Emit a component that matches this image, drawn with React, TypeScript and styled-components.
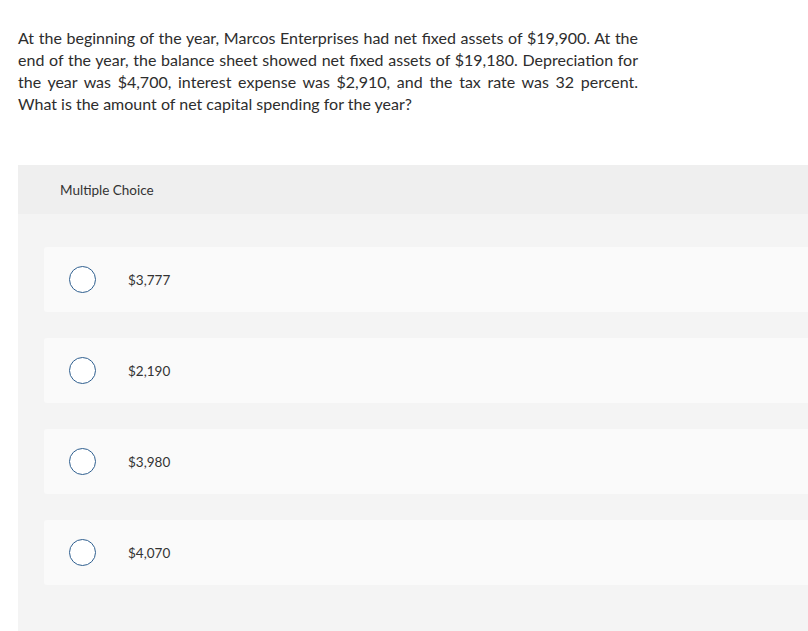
import styled, { createGlobalStyle } from "styled-components";

const choices = ["$3,777", "$2,190", "$3,980", "$4,070"];

export default function App() {
  return (
    <Page>
      <GlobalStyle />
      <Question>
        At the beginning of the year, Marcos Enterprises had net fixed assets
        of $19,900. At the end of the year, the balance sheet showed net fixed
        assets of $19,180. Depreciation for the year was $4,700, interest
        expense was $2,910, and the tax rate was 32 percent. What is the amount
        of net capital spending for the year?
      </Question>
      <Panel>
        <PanelHeader>Multiple Choice</PanelHeader>
        <Choices>
          {choices.map((choice) => (
            <Choice key={choice}>
              <Radio />
              <ChoiceText>{choice}</ChoiceText>
            </Choice>
          ))}
        </Choices>
      </Panel>
    </Page>
  );
}

const GlobalStyle = createGlobalStyle`
  html, body {
    margin: 0;
    padding: 0;
    background: #fff;
    overflow: hidden;
  }
  body {
    font-family: Lato, "Open Sans", Arial, sans-serif;
    color: #333;
  }
`;

const Page = styled.div`
  width: 808px;
  height: 631px;
  overflow: hidden;
  padding: 27px 0 0 18px;
  box-sizing: border-box;
`;

const Question = styled.p`
  margin: 0;
  width: 620px;
  font-size: 16px;
  line-height: 22px;
  text-align: justify;
  color: #2d2d2d;
`;

const Panel = styled.div`
  margin-top: 50px;
  width: 820px;
  background: #f4f4f4;
  min-height: 480px;
`;

const PanelHeader = styled.div`
  height: 49px;
  background: #efefef;
  display: flex;
  align-items: center;
  padding-left: 42px;
  font-size: 13.5px;
  color: #333;
`;

const Choices = styled.div`
  display: flex;
  flex-direction: column;
  gap: 26px;
  padding: 33px 0 0 26px;
`;

const Choice = styled.div`
  height: 65px;
  background: #fafafa;
  border-radius: 3px;
  display: flex;
  align-items: center;
  padding-left: 25px;
`;

const Radio = styled.span`
  width: 27px;
  height: 27px;
  border: 1.5px solid #2f5f8f;
  border-radius: 50%;
  box-sizing: border-box;
  background: #fff;
  flex: none;
`;

const ChoiceText = styled.span`
  margin-left: 32px;
  font-size: 13.5px;
  color: #333;
`;
